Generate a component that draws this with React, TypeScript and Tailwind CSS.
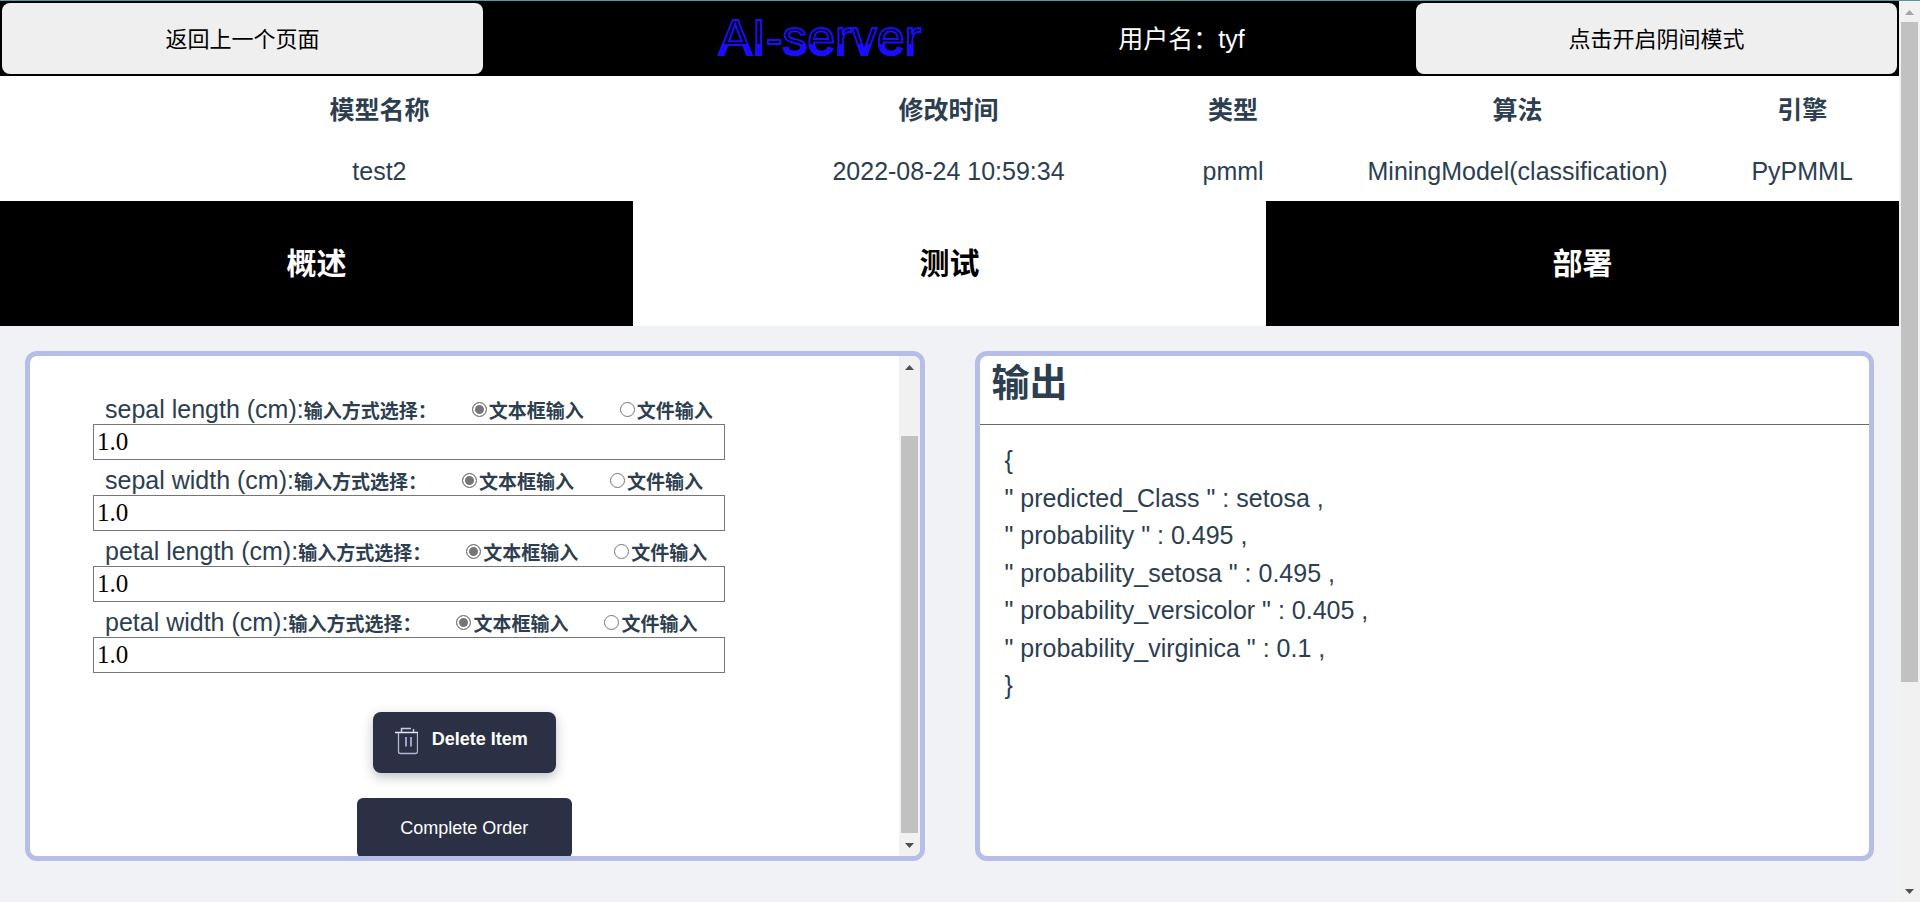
import React, { useState } from "react";

const columns = [
  { title: "模型名称", value: "test2", width: "w-[40%]" },
  { title: "修改时间", value: "2022-08-24 10:59:34", width: "w-[20%]" },
  { title: "类型", value: "pmml", width: "w-[10%]" },
  { title: "算法", value: "MiningModel(classification)", width: "w-[20%]" },
  { title: "引擎", value: "PyPMML", width: "w-[10%]" },
];

const fields = ["sepal length (cm)", "sepal width (cm)", "petal length (cm)", "petal width (cm)"];

const results = [
  ["predicted_Class", "setosa"],
  ["probability", "0.495"],
  ["probability_setosa", "0.495"],
  ["probability_versicolor", "0.405"],
  ["probability_virginica", "0.1"],
];

const tabs = ["概述", "测试", "部署"];

function Arrow({ down, faded }: { down?: boolean; faded?: boolean }) {
  return (
    <svg viewBox="0 0 21 21" className={`h-[21px] w-[21px] shrink-0 ${faded ? "text-[#a3a3a3]" : "text-[#505050]"}`} aria-hidden="true">
      <path d={down ? "M6 8h9l-4.5 5z" : "M6 14h9l-4.5-5z"} fill="currentColor" />
    </svg>
  );
}

function ScrollTrack({ before, thumb, faded }: { before: string; thumb: string; faded?: boolean }) {
  return (
    <div className="flex w-[21px] shrink-0 flex-col bg-[#f1f1f1]" aria-hidden="true">
      <Arrow faded={faded} />
      <div className={before} />
      <div className={`mx-[2px] bg-[#c1c1c1] ${thumb}`} />
      <div className="flex-1" />
      <Arrow down />
    </div>
  );
}

function Radio({ name, label, checked, onChange }: { name: string; label: string; checked: boolean; onChange: () => void }) {
  return (
    <label className="flex items-baseline">
      <input
        type="radio"
        name={name}
        checked={checked}
        onChange={onChange}
        className="mr-[2px] mb-[5px] h-[15px] w-[15px] appearance-none self-center rounded-full border border-[#767676] bg-white checked:bg-[#767676] checked:shadow-[inset_0_0_0_2px_white]"
      />
      {label}
    </label>
  );
}

function Field({ name }: { name: string }) {
  const [mode, setMode] = useState("text");
  const [value, setValue] = useState("1.0");
  const id = name.replace(/\W+/g, "-");
  return (
    <div className="mb-1">
      <div className="flex h-[31px] items-baseline pl-3">
        <label htmlFor={id} className="leading-[33px]">{name}:</label>
        <div role="radiogroup" aria-labelledby={`${id}-legend`} className="flex items-baseline text-[19px] leading-6 font-bold">
          <span id={`${id}-legend`}>输入方式选择：</span>
          <div className="ml-[35px] flex gap-9">
            <Radio name={`${id}-mode`} label="文本框输入" checked={mode === "text"} onChange={() => setMode("text")} />
            <Radio name={`${id}-mode`} label="文件输入" checked={mode === "file"} onChange={() => setMode("file")} />
          </div>
        </div>
      </div>
      <input
        id={id}
        value={value}
        onChange={(e) => setValue(e.target.value)}
        className="block h-9 w-full border border-[#767676] px-[3px] font-['Liberation_Serif','Noto_Sans_CJK_SC',serif] text-[25px] text-black outline-none"
      />
    </div>
  );
}

export default function App() {
  const [tab, setTab] = useState(1);
  return (
    <div className="flex h-screen overflow-hidden border-t border-[#4f9a9a] bg-[#f0f2f5] font-['Liberation_Sans','Noto_Sans_CJK_SC',sans-serif] text-[25px] text-[#2c3e50]">
      <div className="flex min-w-0 flex-1 flex-col">
        <header className="flex h-[75px] shrink-0 items-center bg-black px-[2px]">
          <button className="h-[71px] w-[481px] rounded-lg bg-[#efefef] pt-[2px] text-[22px] text-black">返回上一个页面</button>
          <div className="flex flex-1 items-center justify-center gap-[197px] pl-16">
            <h1 className="bg-[linear-gradient(transparent_57%,#1a0dff_57%)] bg-clip-text text-[50px] leading-[75px] text-transparent [-webkit-text-stroke:2px_#1a0dff]">AI-server</h1>
            <span className="pt-[2px] text-white">用户名：tyf</span>
          </div>
          <button className="h-[71px] w-[481px] rounded-lg bg-[#efefef] pt-[2px] text-[22px] text-black">点击开启阴间模式</button>
        </header>

        <div className="shrink-0 bg-white pr-[2px]">
          <table className="h-[125px] w-full table-fixed text-center">
            <thead>
              <tr className="h-[68px]">
                {columns.map((c) => <th key={c.title} className={`pt-[2px] ${c.width}`}>{c.title}</th>)}
              </tr>
            </thead>
            <tbody>
              <tr>
                {columns.map((c) => <td key={c.title} className="pb-[2px]">{c.value}</td>)}
              </tr>
            </tbody>
          </table>
        </div>

        <nav className="grid h-[125px] shrink-0 grid-cols-3">
          {tabs.map((t, i) => (
            <button key={t} onClick={() => setTab(i)} className={`text-[30px] font-bold ${i === tab ? "bg-white text-black" : "bg-black text-white"}`}>
              {t}
            </button>
          ))}
        </nav>

        <main className="grid h-[560px] shrink-0 grid-cols-2 gap-[50px] p-[25px]">
          <section className="flex overflow-hidden rounded-xl border-[5px] border-[#b6bee8] bg-white">
            <div className="min-w-0 flex-1 overflow-hidden pt-[37px] pl-[63px]">
              <form className="w-[632px]">
                {fields.map((f) => <Field key={f} name={f} />)}
              </form>
              <div className="mr-[63px] flex flex-col items-center gap-[25px] pt-[35px]">
                <button className="flex h-[61px] w-[183px] shrink-0 items-center rounded-lg bg-[#2c3044] pb-1 pl-[22px] text-[18px] font-bold text-white shadow-[0_4px_12px_rgba(44,48,68,0.3)]">
                  <svg viewBox="0 0 23 28" className="mr-[14px] h-7 w-[23px]" fill="none" aria-hidden="true">
                    <path d="M3.5 6V24.5q0 2 2 2h15q2 0 2-2V6" stroke="#b5b7d5" strokeWidth="1.3" />
                    <path d="M0 5.5h23" stroke="#e2e3f5" strokeWidth="1.5" />
                    <path d="M6.5 5V1.5h9.5M18.5 2v3" stroke="#c8caea" strokeWidth="1.5" />
                    <path d="M11 10v9.5M16 10v9.5" stroke="#9da1c9" strokeWidth="2" />
                  </svg>
                  <span className="pb-[2px]">Delete Item</span>
                </button>
                <button className="h-[60px] w-[215px] shrink-0 rounded-md bg-[#2c3044] text-[18px] text-white">Complete Order</button>
              </div>
            </div>
            <ScrollTrack before="h-[59px]" thumb="h-[397px]" />
          </section>

          <section className="rounded-xl border-[5px] border-[#b6bee8] bg-white">
            <h2 className="h-[69px] border-b border-[#696969] pl-3 text-[38px] leading-[55px] font-bold">输出</h2>
            <div className="pt-[17px] pl-[25px] leading-normal">
              <p>{"{"}</p>
              {results.map(([key, value]) => <p key={key}>{`" ${key} " : ${value} ,`}</p>)}
              <p>{"}"}</p>
            </div>
          </section>
        </main>
      </div>
      <ScrollTrack before="h-0" thumb="h-[660px]" faded />
    </div>
  );
}
